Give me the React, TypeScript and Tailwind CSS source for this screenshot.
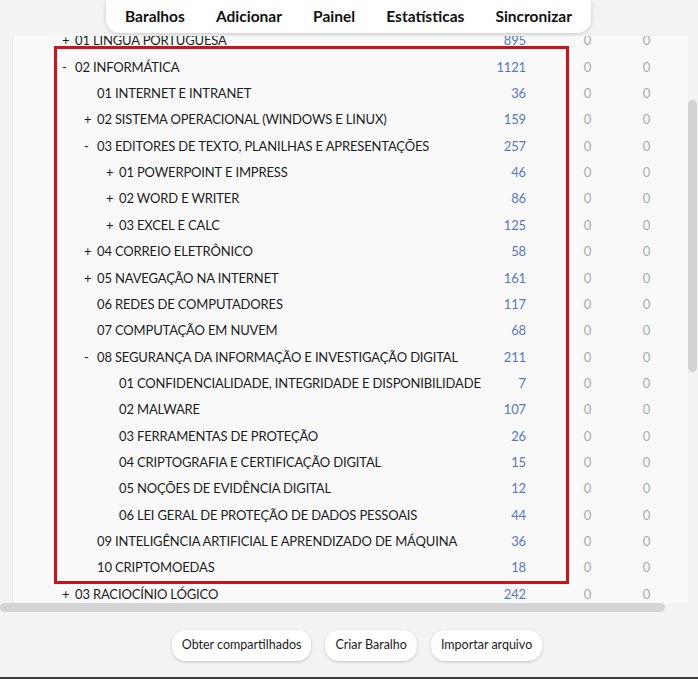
import React from "react";

type Row = { level: number; sign: string; name: string; count: number };

const ROWS: Row[] = [
  { level: 0, sign: "+", name: "01 LÍNGUA PORTUGUESA", count: 895 },
  { level: 0, sign: "-", name: "02 INFORMÁTICA", count: 1121 },
  { level: 1, sign: "", name: "01 INTERNET E INTRANET", count: 36 },
  { level: 1, sign: "+", name: "02 SISTEMA OPERACIONAL (WINDOWS E LINUX)", count: 159 },
  { level: 1, sign: "-", name: "03 EDITORES DE TEXTO, PLANILHAS E APRESENTAÇÕES", count: 257 },
  { level: 2, sign: "+", name: "01 POWERPOINT E IMPRESS", count: 46 },
  { level: 2, sign: "+", name: "02 WORD E WRITER", count: 86 },
  { level: 2, sign: "+", name: "03 EXCEL E CALC", count: 125 },
  { level: 1, sign: "+", name: "04 CORREIO ELETRÔNICO", count: 58 },
  { level: 1, sign: "+", name: "05 NAVEGAÇÃO NA INTERNET", count: 161 },
  { level: 1, sign: "", name: "06 REDES DE COMPUTADORES", count: 117 },
  { level: 1, sign: "", name: "07 COMPUTAÇÃO EM NUVEM", count: 68 },
  { level: 1, sign: "-", name: "08 SEGURANÇA DA INFORMAÇÃO E INVESTIGAÇÃO DIGITAL", count: 211 },
  { level: 2, sign: "", name: "01 CONFIDENCIALIDADE, INTEGRIDADE E DISPONIBILIDADE", count: 7 },
  { level: 2, sign: "", name: "02 MALWARE", count: 107 },
  { level: 2, sign: "", name: "03 FERRAMENTAS DE PROTEÇÃO", count: 26 },
  { level: 2, sign: "", name: "04 CRIPTOGRAFIA E CERTIFICAÇÃO DIGITAL", count: 15 },
  { level: 2, sign: "", name: "05 NOÇÕES DE EVIDÊNCIA DIGITAL", count: 12 },
  { level: 2, sign: "", name: "06 LEI GERAL DE PROTEÇÃO DE DADOS PESSOAIS", count: 44 },
  { level: 1, sign: "", name: "09 INTELIGÊNCIA ARTIFICIAL E APRENDIZADO DE MÁQUINA", count: 36 },
  { level: 1, sign: "", name: "10 CRIPTOMOEDAS", count: 18 },
  { level: 0, sign: "+", name: "03 RACIOCÍNIO LÓGICO", count: 242 },
];

const INDENT = ["pl-[49px]", "pl-[71px]", "pl-[93px]"];

const NAV = ["Baralhos", "Adicionar", "Painel", "Estatísticas", "Sincronizar"];

function DeckRow({ row }: { row: Row }) {
  return (
    <div className="flex h-[26.35px] items-center text-[13px] tracking-[-0.15px] text-[#1c1c1c]">
      <div className={`flex min-w-0 flex-1 items-center whitespace-nowrap ${INDENT[row.level]}`}>
        <span className="w-[13px] shrink-0">{row.sign}</span>
        <span>{row.name}</span>
      </div>
      <div className="w-[60px] text-right text-[#5877c4]">{row.count}</div>
      <div className="w-[32px]" />
      <div className="w-[59px] text-center text-[#ababab]">0</div>
      <div className="w-[59px] text-center text-[#ababab]">0</div>
      <div className="w-[12px]" />
    </div>
  );
}

export default function App() {
  return (
    <div className="flex h-[679px] w-[698px] flex-col overflow-hidden bg-[#f3f3f3] font-['Lato',sans-serif]">
      <div className="relative flex h-[613px]">
        <div className="flex w-[688px] flex-col">
          <div className="ml-[12px] mt-[36px] h-[567px] w-[676px] overflow-hidden border-l border-[#e6e6e6] bg-[#f9f9f9]">
            <div className="-mt-[8px]">
              {ROWS.map((r, i) => (
                <DeckRow key={i} row={r} />
              ))}
            </div>
          </div>
          <div className="h-[10px]">
            <div className="h-[9px] w-[665px] rounded-full bg-[#d4d4d4]" />
          </div>
        </div>
        <div className="w-[10px] pt-[100px]">
          <div className="h-[272px] w-[9px] rounded-full bg-[#d2d2d2]" />
        </div>

        {/* top menu, floats over the list */}
        <nav className="absolute left-[106px] top-0 flex h-[33px] w-[485px] items-center justify-between rounded-b-[14px] bg-white px-[19px] text-[15.5px] font-bold text-[#111] shadow-[0_1px_4px_rgba(0,0,0,0.18)]">
          {NAV.map((n) => (
            <span key={n}>{n}</span>
          ))}
        </nav>

        {/* highlight frame */}
        <div className="pointer-events-none absolute left-[54px] top-[46px] h-[538px] w-[515px] border-[3px] border-[#c8141c]" />
      </div>

      <div className="flex h-[64px] items-center justify-center gap-[14px] pl-[16px] text-[12.5px] text-[#1c1c1c]">
        <button className="h-[31px] rounded-[14px] bg-white px-[10px] shadow-[0_1px_3px_rgba(0,0,0,0.2)]">Obter compartilhados</button>
        <button className="h-[31px] rounded-[14px] bg-white px-[10px] shadow-[0_1px_3px_rgba(0,0,0,0.2)]">Criar Baralho</button>
        <button className="h-[31px] rounded-[14px] bg-white px-[10px] shadow-[0_1px_3px_rgba(0,0,0,0.2)]">Importar arquivo</button>
      </div>
      <div className="h-[2px] bg-[#3c3c3c]" />
    </div>
  );
}
